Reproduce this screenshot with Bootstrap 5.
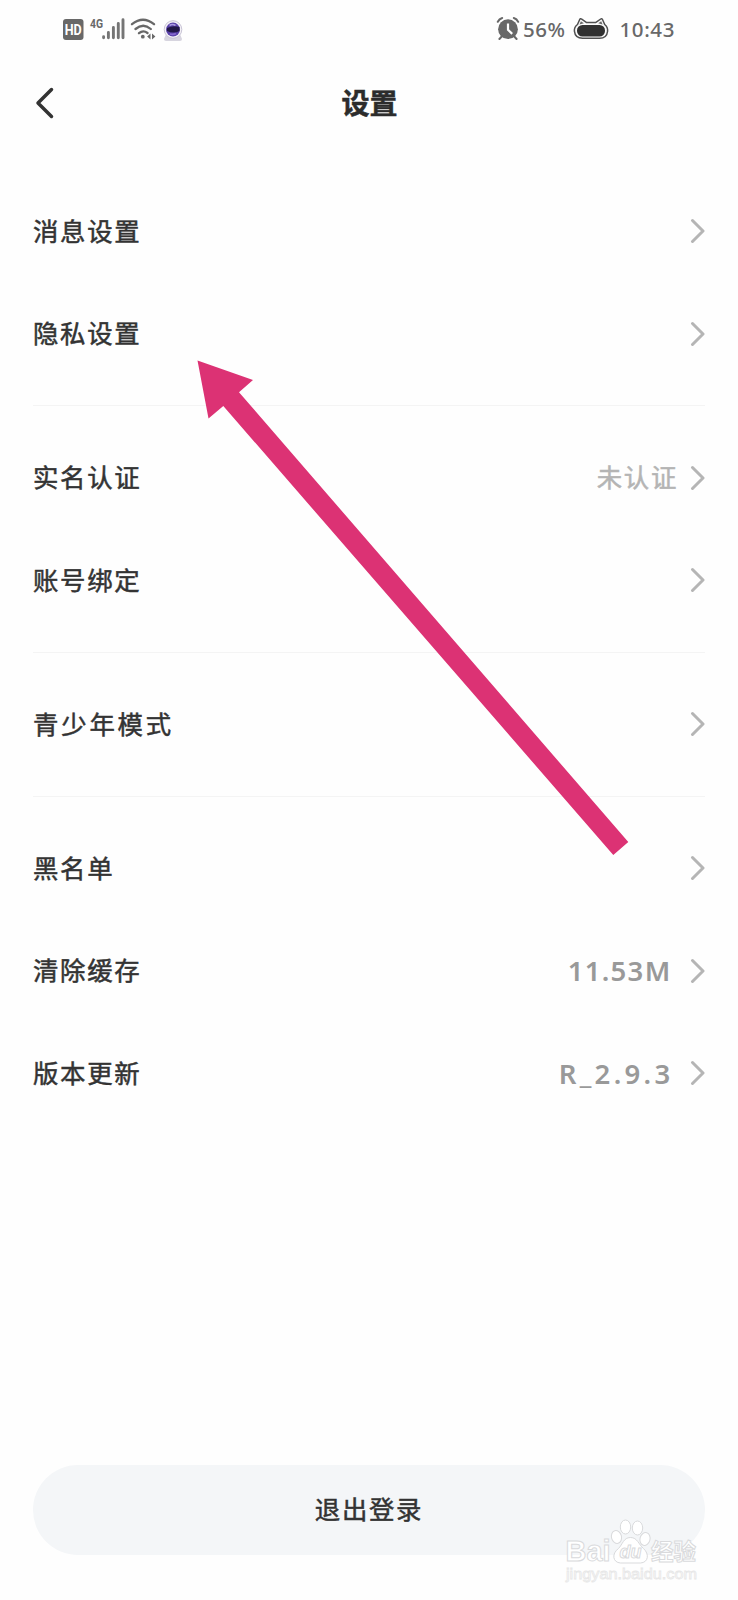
<!DOCTYPE html>
<html lang="zh-CN">
<head>
<meta charset="utf-8">
<meta name="viewport" content="width=device-width, initial-scale=1">
<title>设置</title>
<link href="https://cdn.jsdelivr.net/npm/bootstrap@5.3.0/dist/css/bootstrap.min.css" rel="stylesheet">
<style>
body { background: #fefefe; color: #333; font-family: "Noto Sans", "Noto Sans CJK SC", sans-serif; }
svg { display: block; flex: none; }
.screen { width: 738px; height: 1600px; overflow: hidden; }
.status-bar { height: 58px; padding: 0 63px 0 62px; color: #686868; font-size: 20.5px; font-weight: 500; line-height: 58px; }
.battery-text { margin: 0 7px 0 2px; letter-spacing: .5px; }
.clock-text { margin-left: 11px; letter-spacing: .6px; }
.title-bar { height: 90px; padding: 0 33px 0 34px; }
.title-bar h1 { font-family: "Noto Sans CJK SC", sans-serif; font-size: 28px; font-weight: 700; line-height: 89px; height: 90px; color: #2c2c2c; -webkit-text-stroke: .5px; }
.back-link, .side-space { width: 20px; }
.settings { margin: 32px 33px 0; }
.setting-group { padding: 20.4px 0; border-bottom: 1px solid #f4f4f4; }
.setting-group:first-child { padding-top: 0; }
.setting-group:last-child { border-bottom: 0; }
.setting-row { height: 102.4px; color: #333; }
.label-text, .state-text, .logout { font-family: "Noto Sans CJK SC", sans-serif; font-size: 25.4px; letter-spacing: 1.7px; -webkit-text-stroke: .5px; }
.label-text, .state-text { padding-bottom: 3px; }
.label-wide { letter-spacing: 2.8px; }
.state-text { color: #b4b4b4; margin-right: 12px; }
.num-text { color: #999; font-size: 27.5px; font-weight: 600; line-height: 1; }
.num-size { margin-right: 18.5px; letter-spacing: 1.3px; }
.num-version { margin-right: 16.5px; letter-spacing: 3.3px; }
.logout { height: 90px; margin: auto 33px 45px; padding-bottom: 4px; background: #f4f6f8; color: #333; border: 0; border-radius: 45px; }
.pointer { left: 190px; top: 350px; pointer-events: none; }
.watermark { left: 560px; top: 1514px; pointer-events: none; }
</style>
</head>
<body>
<main class="screen position-relative d-flex flex-column">
  <header class="status-bar d-flex align-items-center">
    <svg width="122" height="30" viewBox="62 14 122 30" role="img" aria-label="4G">
      <rect x="63" y="19" width="20.5" height="21" rx="3" fill="#686868"/>
      <text x="73.2" y="34.5" text-anchor="middle" font-family="Roboto" font-weight="700" font-size="14" fill="#fff" textLength="17" lengthAdjust="spacingAndGlyphs">HD</text>
      <text x="90" y="27.8" font-family="Roboto" font-weight="700" font-size="12.5" fill="#686868" textLength="13" lengthAdjust="spacingAndGlyphs">4G</text>
      <path d="M103.6 36.7v1M108.4 32.5v5.3M113.4 27.5v10.3M118.3 23.5v14.3M123 19.7v18.1" stroke="#757575" stroke-width="2.9" stroke-linecap="round"/>
      <g fill="none" stroke="#686868" stroke-width="2.3" stroke-linecap="round"><path d="M132 24.2q11-9 22 0M135.5 29q7.7-6.5 15.3 0M139 33.2q4.2-3.6 8.5-.2"/></g>
      <circle cx="142.8" cy="36.7" r="1.9" fill="#686868"/>
      <path d="M150.5 33.5v6l-3.4-3zM152 33.5v6l3.4-3z" fill="#686868"/>
      <path d="M164 39l2-5h14l2 5q0 2-2 2h-14q-2 0-2-2z" fill="#d7d5df"/>
      <circle cx="173" cy="29.5" r="8.8" fill="#f4f2f7" stroke="#c8c3d5" stroke-width="1"/>
      <circle cx="173" cy="29.6" r="7" fill="#5941a8"/>
      <path d="M167 28q6-3 12.5-1v4q-6 3-12.5 0z" fill="#211747"/><path d="M169.5 25.5q3-2 6 0" stroke="#a99ae0" stroke-width="1.6" fill="none"/><path d="M170 34q3 1 6-.5" stroke="#8567cf" stroke-width="1.8" fill="none"/>
    </svg>
    <div class="ms-auto d-flex align-items-center">
      <svg width="26" height="30" viewBox="494 14 26 30" aria-hidden="true">
        <circle cx="507" cy="29.2" r="9.9" fill="#686868"/>
        <path d="M496.8 21.8q1.5-3 4.4-3.8M512.8 18q3 .8 4.4 3.8M500.7 36.5l-2.3 2.5M513.3 36.5l2.3 2.5" fill="none" stroke="#686868" stroke-width="2" stroke-linecap="round"/>
        <path d="M507 23.5v6.2l4.2 4.2" fill="none" stroke="#fff" stroke-width="2.2"/>
      </svg>
      <span class="battery-text">56%</span>
      <svg width="36" height="30" viewBox="573 14 36 30" aria-hidden="true">
        <path d="M577.5 24.5l2.2-5q.7-1.300 2-.4l4.600 3.300h9.600l4.800-3.400q1.200-.8 1.800.5l2.200 5q3.300 2.700 2.900 6.700-.8 7.100-8.100 7.100h-17q-7.300 0-8.100-7.100-.4-4 3.100-6.700z" fill="#fafafa" stroke="#505050" stroke-width="1.5" stroke-linejoin="round"/>
        <path d="M579.5 24.5l1.4-3.3 3 2.1zM598.2 23.300l3-2.100 1.400 3.300z" fill="#686868"/>
        <rect x="577" y="25" width="28" height="11.5" rx="5.5" fill="#303030"/>
      </svg>
      <span class="clock-text">10:43</span>
    </div>
  </header>

  <nav class="title-bar d-flex align-items-center justify-content-between">
    <a href="#" class="back-link" aria-label="返回"><svg width="20" height="32" viewBox="0 0 20 32"><path d="M17.5 2.5L4 16l13.5 13.5" fill="none" stroke="#333" stroke-width="3.5" stroke-linecap="round" stroke-linejoin="round"/></svg></a>
    <h1 class="m-0">设置</h1>
    <span class="side-space"></span>
  </nav>

  <svg class="d-none"><defs><symbol id="chev" viewBox="0 0 15 26"><path d="M2.5 2.5L13 13 2.5 23.5" fill="none" stroke="#b5b5b5" stroke-width="3" stroke-linecap="round" stroke-linejoin="round"/></symbol></defs></svg>

  <section class="settings">
    <div class="setting-group">
      <a href="#" class="setting-row d-flex align-items-center text-decoration-none"><span class="label-text">消息设置</span><svg class="ms-auto" width="15" height="26"><use href="#chev"/></svg></a>
      <a href="#" class="setting-row d-flex align-items-center text-decoration-none"><span class="label-text">隐私设置</span><svg class="ms-auto" width="15" height="26"><use href="#chev"/></svg></a>
    </div>
    <div class="setting-group">
      <a href="#" class="setting-row d-flex align-items-center text-decoration-none"><span class="label-text">实名认证</span><span class="state-text ms-auto">未认证</span><svg width="15" height="26"><use href="#chev"/></svg></a>
      <a href="#" class="setting-row d-flex align-items-center text-decoration-none"><span class="label-text">账号绑定</span><svg class="ms-auto" width="15" height="26"><use href="#chev"/></svg></a>
    </div>
    <div class="setting-group">
      <a href="#" class="setting-row d-flex align-items-center text-decoration-none"><span class="label-text label-wide">青少年模式</span><svg class="ms-auto" width="15" height="26"><use href="#chev"/></svg></a>
    </div>
    <div class="setting-group">
      <a href="#" class="setting-row d-flex align-items-center text-decoration-none"><span class="label-text">黑名单</span><svg class="ms-auto" width="15" height="26"><use href="#chev"/></svg></a>
      <a href="#" class="setting-row d-flex align-items-center text-decoration-none"><span class="label-text">清除缓存</span><span class="num-text num-size ms-auto">11.53M</span><svg width="15" height="26"><use href="#chev"/></svg></a>
      <a href="#" class="setting-row d-flex align-items-center text-decoration-none"><span class="label-text">版本更新</span><span class="num-text num-version ms-auto">R_2.9.3</span><svg width="15" height="26"><use href="#chev"/></svg></a>
    </div>
  </section>

  <button type="button" class="logout">退出登录</button>

  <svg class="pointer position-absolute" width="450" height="515" viewBox="190 350 450 515" aria-hidden="true">
    <path d="M197.5 360.5L253 380 239 392.2 628.3 842 613.3 855 223.3 406 208.5 418.5z" fill="#dc3274"/>
  </svg>

  <svg class="watermark position-absolute" width="145" height="75" viewBox="560 1514 145 75" aria-hidden="true">
    <g fill="#fff" stroke="#d9dadc" stroke-width="1">
      <ellipse cx="616.5" cy="1537" rx="5" ry="6.5" transform="rotate(-15 616.5 1537)"/>
      <ellipse cx="625.5" cy="1527" rx="5.2" ry="7"/>
      <ellipse cx="637.5" cy="1528" rx="5.2" ry="7"/>
      <ellipse cx="645" cy="1539" rx="5" ry="6.5" transform="rotate(15 645 1539)"/>
      <path d="M630.5 1537.5c-7 0-8 7-12 11-7 5-6 14 2 14.5h20c8-.5 9-9 3-14.5-5-4-6-11-13-11z"/>
      <text x="565.5" y="1561" font-family="Liberation Sans" font-weight="700" font-size="29" textLength="45" lengthAdjust="spacingAndGlyphs">Bai</text>
      <text x="619.5" y="1558" font-family="Liberation Sans" font-weight="700" font-style="italic" font-size="18" textLength="22">du</text>
      <text x="651" y="1560" font-family="Noto Sans CJK SC" font-weight="700" font-size="23" textLength="45" lengthAdjust="spacingAndGlyphs">经验</text>
      <text x="566" y="1578.5" font-family="Liberation Sans" font-size="15.5" stroke="#e7e7e7" stroke-width=".8" textLength="131" lengthAdjust="spacingAndGlyphs">jingyan.baidu.com</text>
    </g>
  </svg>
</main>
<script src="https://cdn.jsdelivr.net/npm/bootstrap@5.3.0/dist/js/bootstrap.bundle.min.js"></script>
</body>
</html>
